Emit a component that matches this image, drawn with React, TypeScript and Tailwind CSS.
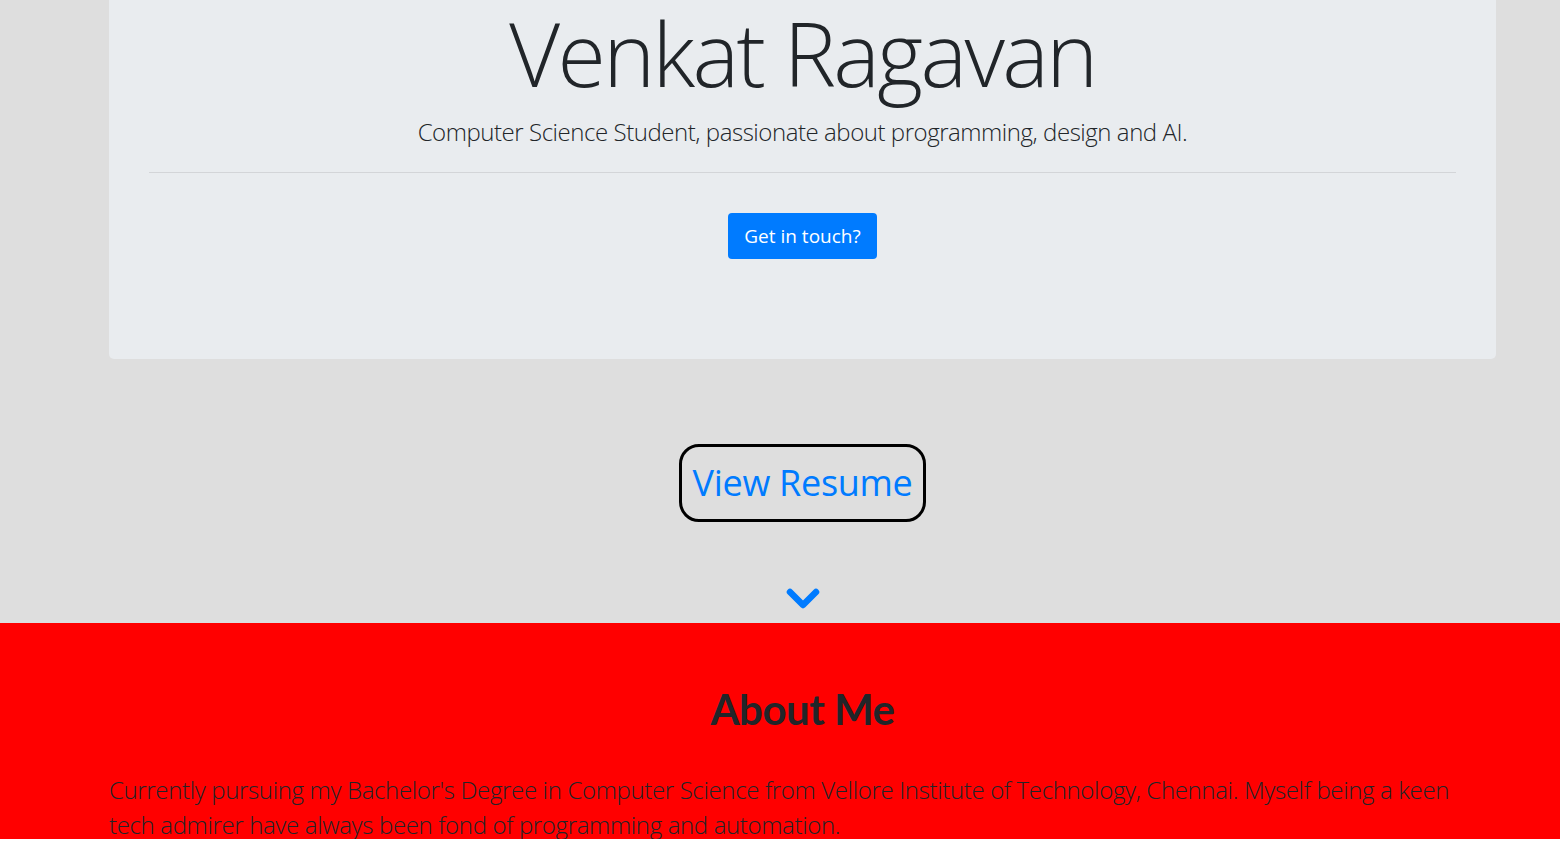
const Chevron = () => (
    <svg width="36" height="24" viewBox="0 0 36 24" fill="none">
        <polyline
            points="5,5 18,18 31,5"
            stroke="#007bff"
            strokeWidth="6.5"
            strokeLinecap="round"
            strokeLinejoin="round"
        />
    </svg>
);

const App = () => {
    return (
        <div className="w-full min-h-screen bg-white font-['Open_Sans',sans-serif] text-[#212529]">
            {/* Hero */}
            <section className="w-full bg-[#dedede] pb-[12px]">
                <div className="ml-[109px] w-[1387px] bg-[#e9ecef] rounded-b-[5px] px-[40px] pb-[100px] flex flex-col items-center">
                    <h1 className="pt-0 text-[88px] leading-[106px] font-light tracking-[-2.6px] text-center">
                        Venkat Ragavan
                    </h1>
                    <p className="mt-[10px] text-[24px] leading-[32px] font-light text-center tracking-[-0.45px]">
                        Computer Science Student, passionate about programming, design and AI.
                    </p>
                    <hr className="w-full mt-[24px] border-0 border-t border-[#d3d5d8]" />
                    <button className="mt-[40px] h-[46px] px-[16px] rounded-[4px] bg-[#007bff] text-white text-[19px] leading-none">
                        Get in touch?
                    </button>
                </div>

                {/* Resume */}
                <div className="ml-[109px] w-[1387px] flex flex-col items-center">
                    <a
                        href="#resume"
                        className="mt-[85px] h-[78px] w-[247px] flex items-center justify-center border-[3px] border-black rounded-[20px] text-[#007bff] text-[36px] tracking-[-0.3px]"
                    >
                        View Resume
                    </a>
                    <div className="mt-[65px]">
                        <Chevron />
                    </div>
                </div>
            </section>

            {/* About */}
            <section className="w-full h-[216px] bg-[#ff0000] overflow-hidden">
                <div className="ml-[109px] w-[1387px]">
                    <h2 className="pt-[62px] text-center text-[42px] leading-[48px] font-bold font-['Lato',sans-serif] tracking-[-0.5px]">
                        About Me
                    </h2>
                    <p className="mt-[39px] text-[24px] leading-[35px] font-light tracking-[-0.35px]">
                        Currently pursuing my Bachelor's Degree in Computer Science from Vellore Institute of
                        Technology, Chennai. Myself being a keen tech admirer have always been fond of programming
                        and automation.
                    </p>
                </div>
            </section>
        </div>
    );
};

export default App;
